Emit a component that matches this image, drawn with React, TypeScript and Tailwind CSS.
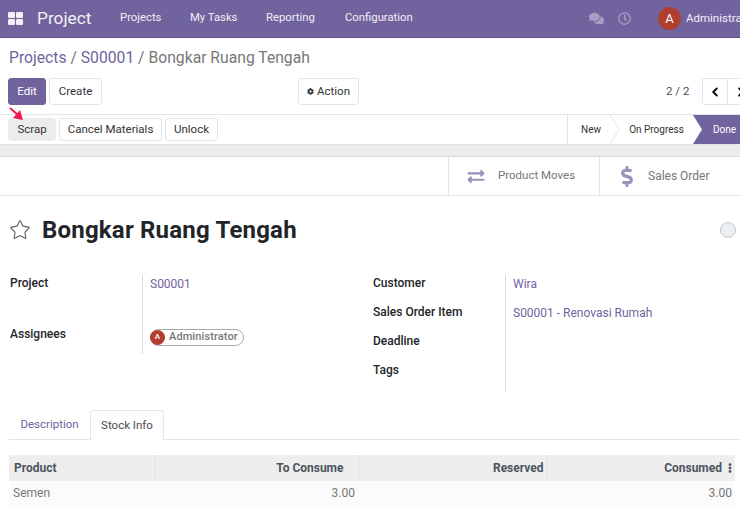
import React from 'react';
import { ChevronLeft, ChevronRight, Star } from 'lucide-react';
import { FaComments, FaDollarSign, FaCog, FaExchangeAlt, FaRegClock, FaEllipsisV } from 'react-icons/fa';

const Avatar = ({ className }: { className: string }) => (
  <span className={`flex shrink-0 items-center justify-center rounded-full bg-[#b03f30] text-white ${className}`}>A</span>
);

const Btn = ({ children, className = '', tone = 'border-[#e2e5ea] bg-white text-[#333]' }: { children: React.ReactNode; className?: string; tone?: string }) => (
  <button className={`shrink-0 rounded-[3px] border text-[11.5px] ${tone} ${className}`}>{children}</button>
);

export default function App() {
  return (
    <div className="relative h-[506px] w-[740px] overflow-hidden bg-white font-['Roboto','Liberation_Sans',sans-serif] text-[12px] text-[#4c4c4c]">
      {/* navbar */}
      <div className="flex h-[38px] items-center whitespace-nowrap border-b border-[#5c4f85] bg-[#71639e] text-white">
        <svg width="15" height="13" viewBox="0 0 15 13" className="ml-[8px] shrink-0">
          <rect x="0" y="0" width="7" height="6" rx="1.2" fill="#f3f1f7" />
          <rect x="8" y="0" width="7" height="6" rx="1.2" fill="#f3f1f7" />
          <rect x="0" y="7" width="7" height="6" rx="1.2" fill="#f3f1f7" />
          <rect x="8" y="7" width="7" height="6" rx="1.2" fill="#f3f1f7" />
        </svg>
        <span className="ml-[14px] w-[83px] shrink-0 text-[17.3px] leading-none text-[#f1eff6]">Project</span>
        <div className="flex w-[469px] shrink-0 text-[11.3px] text-[#f1eff6]">
          <span className="w-[70px]">Projects</span>
          <span className="w-[76px]">My Tasks</span>
          <span className="w-[79px]">Reporting</span>
          <span>Configuration</span>
        </div>
        <FaComments className="h-[15px] w-[15px] shrink-0 text-[#a79fc4]" />
        <FaRegClock className="ml-[14px] h-[13px] w-[13px] shrink-0 text-[#a79fc4]" />
        <Avatar className="ml-[27px] h-[23px] w-[23px] text-[13px]" />
        <span className="ml-[5px] text-[11.5px] text-[#f1eff6]">Administrator</span>
      </div>

      {/* control panel */}
      <div className="whitespace-nowrap px-[9px] pt-[10px] text-[15.7px] leading-[20px] text-[#71639e]">
        Projects <span className="text-[#777]">/</span> S00001 <span className="text-[#777]">/</span> <span className="text-[#777]">Bongkar Ruang Tengah</span>
      </div>
      <div className="mt-[10px] flex h-[27px] items-stretch whitespace-nowrap pl-[8px]">
        <Btn className="w-[38px]" tone="border-[#71639e] bg-[#71639e] text-white">Edit</Btn>
        <Btn className="ml-[3px] w-[53px]">Create</Btn>
        <Btn className="ml-[196px] flex w-[61px] items-center justify-center gap-[3px]">
          <FaCog className="h-[7px] w-[7px]" />Action
        </Btn>
        <span className="ml-[307px] w-[22px] shrink-0 self-center text-[11.5px] text-[#4c4c4c]">2 / 2</span>
        <div className="ml-[14px] flex w-[52px] shrink-0 rounded-[3px] border border-[#e2e5ea] text-[#111]">
          <span className="flex w-[26px] items-center justify-center border-r border-[#e2e5ea]"><ChevronLeft size={14} strokeWidth={3.5} /></span>
          <span className="flex w-[26px] items-center justify-center"><ChevronRight size={14} strokeWidth={3.5} /></span>
        </div>
      </div>

      {/* status bar */}
      <div className="mt-[9px] flex h-[31px] items-center border-y border-[#e2e5ea] pl-[8px]">
        <Btn className="h-[23px] w-[48px]" tone="border-[#ececec] bg-[#ececec] text-[#333]">Scrap</Btn>
        <Btn className="ml-[3px] h-[23px] w-[103px]">Cancel Materials</Btn>
        <Btn className="ml-[3px] h-[23px] w-[53px]">Unlock</Btn>
        <div className="ml-auto flex h-full w-[173px] shrink-0 items-stretch border-l border-[#e2e5ea] text-[10px]">
          <span className="flex w-[42px] items-center justify-center pl-[4px] text-[#333]">New</span>
          <svg width="10" height="29" viewBox="0 0 10 29" className="shrink-0"><path d="M0 0 L9 14.5 L0 29" fill="none" stroke="#e2e5ea" /></svg>
          <span className="flex w-[73px] items-center justify-center text-[#333]">On Progress</span>
          <div className="relative flex flex-1 items-center bg-[#71639e] pl-[20px] text-white">
            <svg width="9" height="29" viewBox="0 0 9 29" className="absolute left-0 top-0"><path d="M0 0 L9 14.5 L0 29 Z" fill="#fff" /></svg>
            Done
          </div>
        </div>
      </div>

      {/* sheet background band */}
      <div className="h-[12px] border-b border-[#d9d9d9] bg-[repeating-conic-gradient(#e6e6e6_0_25%,#f3f3f3_0_50%)] bg-[length:2px_2px]" />

      {/* stat buttons */}
      <div className="flex h-[39px] justify-end border-b border-[#e2e5ea]">
        <div className="flex w-[151px] items-center border-l border-[#e2e5ea] pl-[17px] text-[#777]">
          <FaExchangeAlt className="h-[17px] w-[20px] text-[#9a92bd]" />
          <span className="ml-[12px] text-[11.5px]">Product Moves</span>
        </div>
        <div className="flex w-[141px] items-center border-l border-[#e2e5ea] pl-[21px] text-[#777]">
          <FaDollarSign className="h-[21px] w-[12px] text-[#9a92bd]" />
          <span className="ml-[15px]">Sales Order</span>
        </div>
      </div>

      {/* title */}
      <div className="mt-[20px] flex h-[28px] items-center pl-[9px]">
        <Star size={22} strokeWidth={1.3} className="text-[#5f6570]" />
        <h1 className="ml-[11px] text-[24px] font-bold tracking-[0.2px] text-[#212529]">Bongkar Ruang Tengah</h1>
        <span className="ml-auto mr-[4px] h-[16px] w-[16px] rounded-full border border-[#c4c4c4] bg-[#eceff1]" />
      </div>

      {/* fields */}
      <div className="mt-[31px] flex pl-[10px] leading-[16px]">
        <div className="grid w-[363px] grid-cols-[132px_1fr] grid-rows-[51px_28px] self-start">
          <b className="font-medium text-[#212529]">Project</b>
          <span className="border-l border-[#d9d9d9] pl-[7px] pt-[1px] text-[#71639e]">S00001</span>
          <b className="font-medium text-[#212529]">Assignees</b>
          <div className="border-l border-[#d9d9d9] pl-[7px] pt-[1px]">
            <span className="inline-flex h-[17px] items-center rounded-full border border-[#a9a9a9] pr-[5px] text-[11px] font-medium text-[#777]">
              <Avatar className="-ml-px h-[15px] w-[15px] text-[8px]" />
              <span className="ml-[4px] tracking-[0.1px]">Administrator</span>
            </span>
          </div>
        </div>
        <div className="grid grid-cols-[132px_1fr] grid-rows-[29px_29px_29px_30px]">
          <b className="font-medium text-[#212529]">Customer</b>
          <span className="border-l border-[#d9d9d9] pl-[7px] pt-[1px] text-[#71639e]">Wira</span>
          <b className="font-medium text-[#212529]">Sales Order Item</b>
          <span className="border-l border-[#d9d9d9] pl-[7px] pt-[1px] text-[#71639e]">S00001 - Renovasi Rumah</span>
          <b className="font-medium text-[#212529]">Deadline</b>
          <span className="border-l border-[#d9d9d9]" />
          <b className="font-medium text-[#212529]">Tags</b>
          <span className="border-l border-[#d9d9d9]" />
        </div>
      </div>

      {/* tabs */}
      <div className="ml-[9px] mt-[18px] flex h-[30px] border-b border-[#e2e5ea] text-[11.5px]">
        <span className="flex w-[81px] items-center justify-center text-[#71639e]">Description</span>
        <span className="-mb-px flex w-[74px] items-center justify-center rounded-t-[3px] border border-b-0 border-[#e2e5ea] bg-white text-[#4c4c4c]">Stock Info</span>
      </div>

      {/* table */}
      <table className="ml-[9px] mt-[15px] w-[726px] table-fixed border-collapse">
        <thead>
          <tr className="h-[26px] bg-[#eeeeee] font-bold text-[#4c5560]">
            <th className="w-[146px] border-r border-[#e2e2e2] pl-[5px] text-left font-bold">Product</th>
            <th className="w-[203px] border-r border-[#e2e2e2] pr-[14px] text-right font-bold">To Consume</th>
            <th className="w-[189px] border-r border-[#e2e2e2] pr-[3px] text-right font-bold">Reserved</th>
            <th className="pr-[3px] text-right font-bold">
              <span className="inline-flex items-center gap-[6px]">Consumed <FaEllipsisV className="h-[10px] w-[4px]" /></span>
            </th>
          </tr>
        </thead>
        <tbody>
          <tr className="h-[25px] border-b border-[#e2e5ea] bg-[#fbfbfb] text-[#777]">
            <td className="pl-[4px]">Semen</td>
            <td className="pr-[3px] text-right">3.00</td>
            <td />
            <td className="pr-[3px] text-right">3.00</td>
          </tr>
        </tbody>
      </table>

      {/* red annotation arrow */}
      <svg width="16" height="14" viewBox="0 0 16 14" className="absolute left-[8px] top-[107px]">
        <path d="M2 1 L10 8" stroke="#f0184f" strokeWidth="2" />
        <path d="M15 13 L5 11 L12 3 Z" fill="#f0184f" />
      </svg>
    </div>
  );
}
